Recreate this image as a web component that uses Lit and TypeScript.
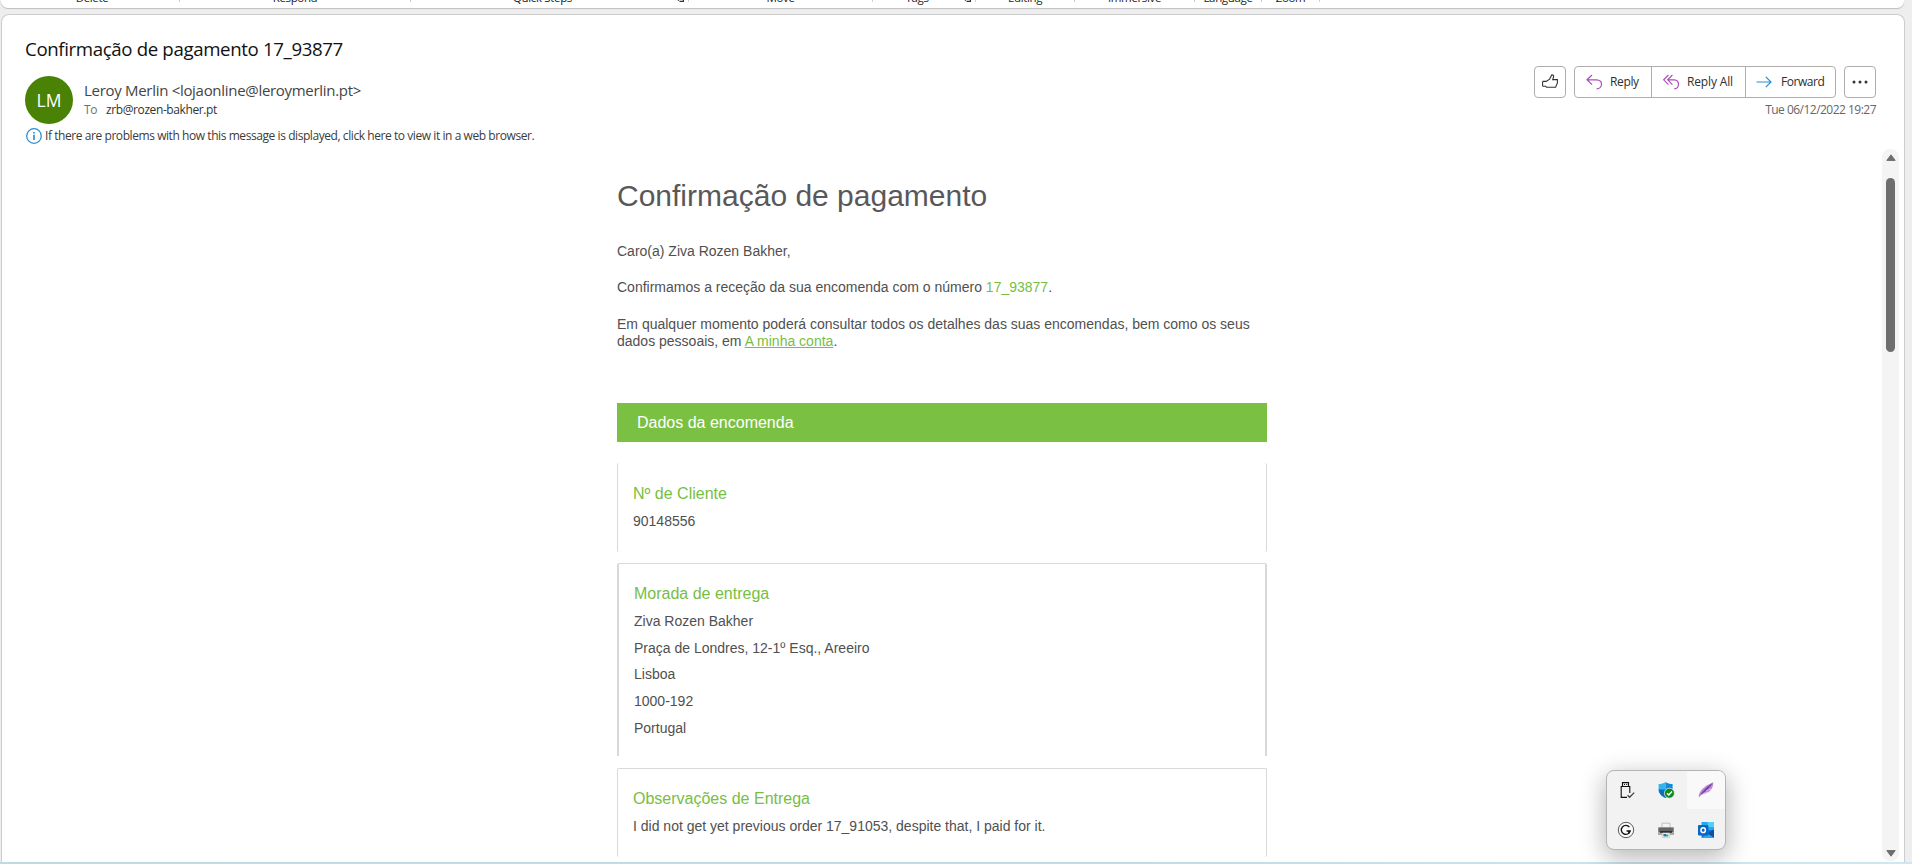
import { LitElement, html, css, svg } from "lit";
import { customElement } from "lit/decorators.js";

interface RibbonGroup { name: string; width: number; launcher?: boolean; }

const GROUPS: RibbonGroup[] = [
  { name: "Delete", width: 178 },
  { name: "Respond", width: 231 },
  { name: "Quick Steps", width: 278, launcher: true },
  { name: "Move", width: 184 },
  { name: "Tags", width: 103, launcher: true },
  { name: "Editing", width: 99 },
  { name: "Immersive", width: 120 },
  { name: "Language", width: 67 },
  { name: "Zoom", width: 58 },
];

@customElement("ribbon-bar")
export class RibbonBar extends LitElement {
  static styles = css`
    :host { display: block; height: 9px; overflow: hidden; padding-bottom: 2px; }
    .bar {
      display: flex; height: 8px; width: 1903px; margin-left: 1px; box-sizing: border-box;
      background: #fff; border-radius: 0 0 7px 7px; padding-left: 1px;
      box-shadow: 0 1px 1px #bdbdbd; overflow: visible;
      font: 11.5px/14px "Open Sans", "Noto Sans", sans-serif; letter-spacing: -0.35px; color: #1c1c1c;
    }
    .group { box-sizing: border-box; height: 2px; border-right: 1px solid #cfcfcf; display: flex; justify-content: center; white-space: nowrap; }
    .group.first { padding-left: 3px; }
    .label { margin-top: -9px; height: 14px; }
    .group.launch .label { flex: 1; text-align: center; }
    .launcher { width: 7px; height: 3px; margin: -1px 4px 0 3px; flex: none; }
  `;
  render() {
    return html`<div class="bar">${GROUPS.map((g, i) => html`
      <div class="group ${i === 0 ? "first" : ""} ${g.launcher ? "launch" : ""}" style="width:${g.width}px">
        <span class="label">${g.name}</span>
        ${g.launcher ? html`<svg class="launcher" viewBox="0 0 7 3"><path d="M0 0l2 1.5M2.5 2.4H6.4V0" fill="none" stroke="#333" stroke-width="1.2"/></svg>` : ""}
      </div>`)}</div>`;
  }
}

const thumb = svg`<path d="M.6 7.4H4.2L7.6 5.1 9.7 .9C11 .6 11.9 1.5 11.6 2.8L10.7 5.6H15.4V9L13.6 13.2H4.6L3.6 12.2H.6M.6 7.4V12.2" />`;
const reply = svg`<path d="M6 1L1 5.8 6 10.6M1.2 5.8H10.6C17.3 5.8 17 14.8 10.6 14.8"/>`;
const replyAll = svg`<path d="M5.4 1L.7 5.8 5.4 10.6M9.4 1L4.7 5.8 9.4 10.6M4.9 5.8H11.3C17 5.8 16.8 14.8 11.2 14.8"/>`;
const forward = svg`<path d="M.5 8H15M9.8 2.8L15 8 9.8 13.2"/>`;

@customElement("message-actions")
export class MessageActions extends LitElement {
  static styles = css`
    :host { display: flex; flex-direction: column; align-items: flex-end; font: 12px/16px "Open Sans", "Noto Sans", sans-serif; letter-spacing: -0.35px; color: #2e2e2e; }
    .row { display: flex; gap: 8px; }
    .box { box-sizing: border-box; height: 32px; border: 1px solid #b1adab; border-radius: 4px; display: flex; }
    .square { width: 32px; align-items: center; justify-content: center; }
    .split { width: 262px; }
    .btn { display: flex; align-items: center; box-sizing: border-box; padding-left: 11px; gap: 8px; white-space: nowrap; }
    .btn + .btn { border-left: 1px solid #b1adab; }
    .reply { width: 76px; }
    .all { width: 94px; letter-spacing: -0.15px; }
    .fwd { flex: 1; padding-left: 10px; gap: 9px; letter-spacing: -0.45px; }
    svg { width: 16px; height: 16px; fill: none; stroke-width: 1.2; flex: none; overflow: visible; }
    .purple { stroke: #a94fb8; }
    .blue { stroke: #2b8fd0; }
    .dark { stroke: #333; stroke-width: 1.1; }
    .dots { fill: #333; stroke: none; }
    .date { margin-top: 4px; color: #666; letter-spacing: -0.52px; white-space: nowrap; }
  `;
  render() {
    return html`
      <div class="row">
        <div class="box square"><svg class="dark" viewBox="0 0 16 16">${thumb}</svg></div>
        <div class="box split">
          <div class="btn reply"><svg class="purple" viewBox="0 0 16 16">${reply}</svg>Reply</div>
          <div class="btn all"><svg class="purple" viewBox="0 0 16 16">${replyAll}</svg>Reply All</div>
          <div class="btn fwd"><svg class="blue" viewBox="0 0 16 16">${forward}</svg>Forward</div>
        </div>
        <div class="box square"><svg class="dots" viewBox="0 0 16 16"><circle cx="2" cy="8" r="1.5"/><circle cx="8" cy="8" r="1.5"/><circle cx="14" cy="8" r="1.5"/></svg></div>
      </div>
      <div class="date">Tue 06/12/2022 19:27</div>`;
  }
}

@customElement("mail-body")
export class MailBody extends LitElement {
  static styles = css`
    :host { display: block; box-sizing: border-box; width: 650px; padding-top: 29px; font: 14px/17px "Liberation Sans", Arial, sans-serif; color: #505050; }
    h1 { margin: 0 0 29px; font-size: 30px; line-height: 36px; font-weight: 400; color: #58585a; white-space: nowrap; }
    p { margin: 0; }
    .intro { display: flex; flex-direction: column; gap: 19px; }
    .intro .last { margin-top: 1px; }
    .green { color: #78be43; }
    .link { text-decoration: underline; }
    .banner { margin-top: 53px; height: 39px; line-height: 39px; padding-left: 20px; background: #7ac143; color: #fff; font-size: 16px; }
    .card { box-sizing: border-box; border: solid #d9d9d9; border-width: 0 1px; border-radius: 2px; padding: 21px 15px 0; line-height: 26.75px; }
    .client { margin-top: 21px; height: 89px; }
    .address { margin-top: 11px; height: 193px; border-width: 1px 2px 0; padding-top: 20px; border-radius: 2px 2px 0 0; }
    .notes { margin-top: 12px; height: 89px; border-top-width: 1px; padding-top: 19.5px; }
    h2 { margin: 0 0 3.75px; font-size: 16px; line-height: 20px; font-weight: 400; color: #78be43; }
    .notes h2 { margin-bottom: 4.5px; }
  `;
  render() {
    const address = ["Ziva Rozen Bakher", "Praça de Londres, 12-1º Esq., Areeiro", "Lisboa", "1000-192", "Portugal"];
    return html`
      <h1>Confirmação de pagamento</h1>
      <div class="intro">
        <p>Caro(a) Ziva Rozen Bakher,</p>
        <p>Confirmamos a receção da sua encomenda com o número <span class="green">17_93877</span>.</p>
        <p class="last">Em qualquer momento poderá consultar todos os detalhes das suas encomendas, bem como os seus dados pessoais, em <span class="green link">A minha conta</span>.</p>
      </div>
      <div class="banner">Dados da encomenda</div>
      <div class="card client"><h2>Nº de Cliente</h2><div>90148556</div></div>
      <div class="card address"><h2>Morada de entrega</h2>${address.map((l) => html`<div>${l}</div>`)}</div>
      <div class="card notes"><h2>Observações de Entrega</h2><div>I did not get yet previous order 17_91053, despite that, I paid for it.</div></div>`;
  }
}

@customElement("tray-flyout")
export class TrayFlyout extends LitElement {
  static styles = css`
    :host { display: grid; grid-template-columns: 39px 41px 38px; grid-template-rows: 38px 40px; box-sizing: border-box; width: 120px; height: 80px;
      background: #f2f2f2; border: 1px solid #b4b4b4; border-radius: 8px; overflow: hidden; box-shadow: 0 7px 24px 2px rgba(0,0,0,.27); }
    .cell { display: flex; align-items: center; justify-content: center; box-sizing: border-box; }
    .cell:not(.right) { padding-right: 1px; }
    .low { padding-top: 2px; }
    .hot { background: #f9f9f9; }
    svg { width: 16px; height: 16px; overflow: visible; }
  `;
  render() {
    return html`
      <div class="cell"><svg viewBox="0 0 16 16" fill="none" stroke="#111" stroke-width="1.1"><path d="M4.5 4.2V.6H10.5V4.2M4.2 4.5H3.2V15.4H9M4 4.5H11.8V11"/><path d="M6 2.5h1M8.2 2.5h1" /><path d="M9.6 13.2l2 2.1 4.6-4.7" stroke="#444" stroke-width="1.3"/></svg></div>
      <div class="cell"><svg viewBox="0 0 16 16"><path d="M7.6 0C5.6 1.5 3.2 2 .6 2V7.5C.6 11.8 4 14.5 7.6 16Z" fill="#35b4ea"/><path d="M7.6 0C9.6 1.5 12 2 14.6 2V7.5C14.6 11.8 11 14.5 7.6 16Z" fill="#1488d8"/><path d="M.6 7.6H7.6V16C4 14.5 .8 11.8 .6 7.6Z" fill="#0f6cbd"/><circle cx="11.4" cy="11.2" r="5" fill="#0d8a1c" stroke="#f2f2f2" stroke-width=".7"/><path d="M9 11.2l1.8 1.8 3.2-3.4" fill="none" stroke="#fff" stroke-width="1.5"/></svg></div>
      <div class="cell hot right"><svg viewBox="0 0 16 16"><path d="M.8 15.4C.6 9.8 5 4.5 15.2 .3 15.8 6.8 11 11.4 3.2 12.8Z" fill="#b68ad0"/><path d="M.8 15.6C2.5 11.6 7 6.2 14.8 .8 11.6 6 6.6 10.6 2.6 12.8Z" fill="#7d35a8"/><path d="M5 11.4l6-1.2M8 8.6l5.4-1.6" stroke="#ead9f3" stroke-width=".6"/></svg></div>
      <div class="cell low"><svg viewBox="0 0 16 16" fill="none"><circle cx="8" cy="8" r="7.7" stroke="#333" stroke-width=".8" fill="#fafafa"/><path d="M11.4 5.1A4.5 4.5 0 1 0 12.2 9H8.6M10.8 8.9V12" stroke="#111" stroke-width="1.3"/></svg></div>
      <div class="cell low"><svg viewBox="0 0 16 16"><path d="M4 1.2H12V6H4Z" fill="#f5f5f5" stroke="#b5b5b5" stroke-width=".8"/><path d="M0 5.4H16V13H0Z" fill="#a9a9a9"/><path d="M.6 5.6H15.4V10H.6Z" fill="#666"/><path d="M2 9.2H14V10.8H2Z" fill="#222"/><path d="M4.3 11H11.7V15.6H4.3Z" fill="#fff" stroke="#bbb" stroke-width=".6"/><path d="M5.4 12H8V14.4H5.4Z" fill="#1f78c1"/><path d="M8 12.4H10.4V14.4H8Z" fill="#3b9a6d"/></svg></div>
      <div class="cell low right"><svg viewBox="0 0 16 16"><path d="M3.5 0H16V8H3.5Z" fill="#28a8ea"/><path d="M9.6 0H16V5H9.6Z" fill="#50d0fa"/><path d="M3.5 8H16V15.8H3.5Z" fill="#0f78d4"/><path d="M16 7.2L9.5 11.4 16 15.8Z" fill="#14509a"/><path d="M9.5 11.4L16 15.8H4Z" fill="#28a8ea"/><rect x="0" y="3" width="10.4" height="10.4" rx="1" fill="#0a66c2"/><ellipse cx="5.2" cy="8.2" rx="2.2" ry="2.4" fill="none" stroke="#fff" stroke-width="1.5"/></svg></div>`;
  }
}

@customElement("app-root")
export class AppRoot extends LitElement {
  static styles = css`
    :host { display: flex; flex-direction: column; position: relative; width: 1912px; height: 864px; overflow: hidden; background: #eeeeee; font-family: "Open Sans", "Noto Sans", sans-serif; }
    .panel { box-sizing: border-box; width: 1904px; height: 848px; margin: 3px 0 0 1px; display: flex; flex-direction: column; background: #fff; border: 1px solid #cdcdcd; border-bottom: 0; border-radius: 8px 8px 0 0; overflow: hidden; }
    .head { display: flex; justify-content: space-between; height: 134px; padding: 0 28px 0 23px; flex: none; }
    .subject { margin: 22px 0 15px; font-size: 18.67px; line-height: 24px; letter-spacing: -0.36px; color: #111; white-space: nowrap; }
    .sender { display: flex; gap: 11px; }
    .avatar { width: 48px; height: 48px; border-radius: 50%; background: #498205; color: #fff; font-size: 17.5px; line-height: 48px; text-align: center; }
    .from { padding-top: 3.5px; font-size: 15px; line-height: 20px; letter-spacing: -0.3px; color: #444; white-space: nowrap; }
    .to { display: flex; gap: 9px; margin-top: 2px; font-size: 12px; line-height: 16px; letter-spacing: -0.4px; color: #333; }
    .to .lbl { color: #707070; }
    .info { display: flex; align-items: center; gap: 3px; margin-top: 3.5px; font-size: 12px; line-height: 16px; letter-spacing: -0.43px; color: #3b3b3b; white-space: nowrap; }
    .info svg { width: 16px; height: 16px; margin-left: 1px; }
    .actions { padding-top: 51px; }
    .view { display: flex; justify-content: space-between; flex: 1; min-height: 0; padding: 0 5px 0 615px; }
    .scroll { box-sizing: border-box; width: 17px; height: 712px; border-radius: 8px; background: #f4f4f4; display: flex; flex-direction: column; align-items: center; padding: 5px 0 4px; }
    .scroll svg { width: 10px; height: 7px; flex: none; }
    .thumb { width: 9px; height: 174px; border-radius: 5px; background: #6e6e6e; margin: 17px 0 auto; }
    .strip { height: 2px; flex: none; background: linear-gradient(90deg, #bfdbe2, #c2dce6 60%, #cfe8f0); }
    .tray { position: absolute; left: 1606px; top: 770px; }
  `;
  render() {
    return html`
      <ribbon-bar></ribbon-bar>
      <div class="panel">
        <div class="head">
          <div>
            <div class="subject">Confirmação de pagamento 17_93877</div>
            <div class="sender">
              <div class="avatar">LM</div>
              <div>
                <div class="from">Leroy Merlin &lt;lojaonline@leroymerlin.pt&gt;</div>
                <div class="to"><span class="lbl">To</span><span>zrb@rozen-bakher.pt</span></div>
              </div>
            </div>
            <div class="info">
              <svg viewBox="0 0 16 16"><circle cx="8" cy="8" r="7.3" fill="none" stroke="#2b8fd0" stroke-width="1.3"/><path d="M8 6.7V12M8 4V5.6" stroke="#2b8fd0" stroke-width="1.7"/></svg>
              <span>If there are problems with how this message is displayed, click here to view it in a web browser.</span>
            </div>
          </div>
          <message-actions class="actions"></message-actions>
        </div>
        <div class="view">
          <mail-body></mail-body>
          <div class="scroll">
            <svg viewBox="0 0 10 7"><path d="M5 .8L9.2 6.4H.8Z" fill="#6e6e6e" stroke="#6e6e6e" stroke-linejoin="round"/></svg>
            <div class="thumb"></div>
            <svg viewBox="0 0 10 7"><path d="M5 6.2L9.2 .6H.8Z" fill="#6e6e6e" stroke="#6e6e6e" stroke-linejoin="round"/></svg>
          </div>
        </div>
      </div>
      <div class="strip"></div>
      <tray-flyout class="tray"></tray-flyout>`;
  }
}
